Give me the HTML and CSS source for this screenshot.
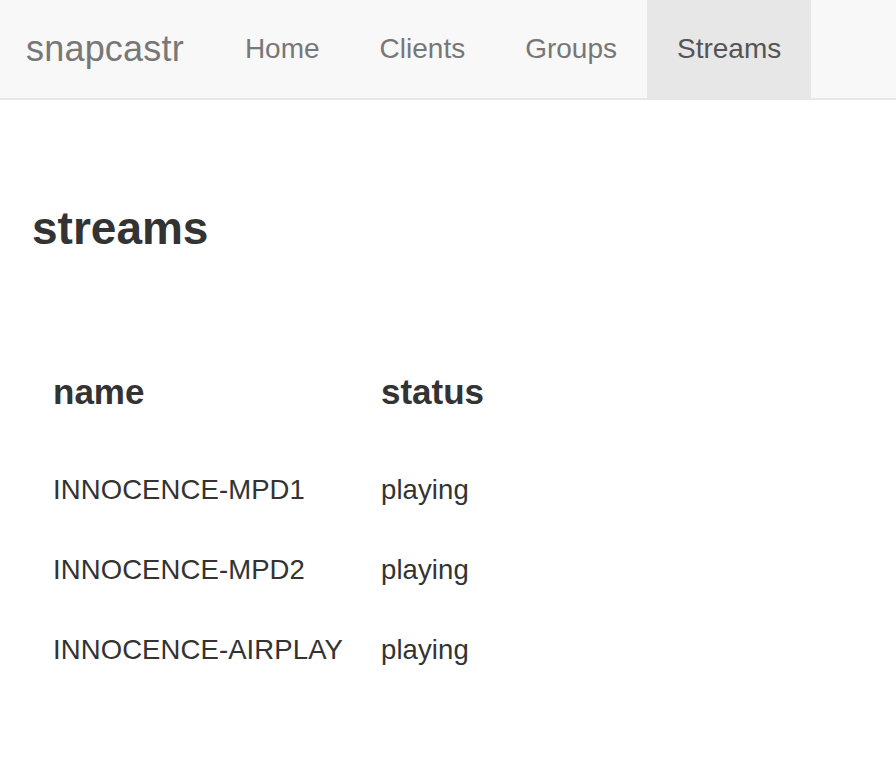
FILE: index.html
```html
<!DOCTYPE html>
<html>
<head>
<meta charset="utf-8">
<title>snapcastr</title>
<link rel="stylesheet" href="styles.css">
</head>
<body>
<nav class="navbar">
  <a class="brand" href="#">snapcastr</a>
  <ul class="nav">
    <li><a href="#">Home</a></li>
    <li><a href="#">Clients</a></li>
    <li><a href="#">Groups</a></li>
    <li class="active"><a href="#">Streams</a></li>
  </ul>
</nav>
<main class="container">
  <h3 class="title">streams</h3>
  <div class="table">
    <div class="th">name</div>
    <div class="th">status</div>
    <div class="td">INNOCENCE-MPD1</div>
    <div class="td">playing</div>
    <div class="td">INNOCENCE-MPD2</div>
    <div class="td">playing</div>
    <div class="td">INNOCENCE-AIRPLAY</div>
    <div class="td">playing</div>
  </div>
</main>
</body>
</html>
```
FILE: styles.css
```css
* { box-sizing: border-box; }
html, body {
  margin: 0;
  padding: 0;
  background: #fff;
  font-family: "Liberation Sans", Arial, Helvetica, sans-serif;
  color: #333;
}
.navbar {
  display: flex;
  align-items: stretch;
  height: 100px;
  background: #f8f8f8;
  border-bottom: 2px solid #e7e7e7;
}
.brand {
  display: flex;
  align-items: center;
  padding: 0 31px 0 26px;
  font-size: 36px;
  letter-spacing: 0.2px;
  color: #777;
  text-decoration: none;
}
.nav {
  display: flex;
  margin: 0;
  padding: 0;
  list-style: none;
}
.nav li {
  display: flex;
}
.nav a {
  display: flex;
  align-items: center;
  padding: 0 30px;
  font-size: 28px;
  color: #777;
  text-decoration: none;
}
.nav li.active a {
  background: #e7e7e7;
  color: #555;
}
.container {
  padding: 0 30px;
}
.title {
  margin: 98px 0 0 2px;
  font-size: 46px;
  font-weight: bold;
  line-height: 60px;
}
.table {
  display: grid;
  grid-template-columns: 328px auto;
  justify-content: start;
  margin: 114px 0 0 23px;
}
.th {
  font-size: 35px;
  font-weight: bold;
  line-height: 40px;
  height: 98px;
}
.td {
  font-size: 27.5px;
  letter-spacing: 0.1px;
  line-height: 40px;
  height: 80px;
}
```
